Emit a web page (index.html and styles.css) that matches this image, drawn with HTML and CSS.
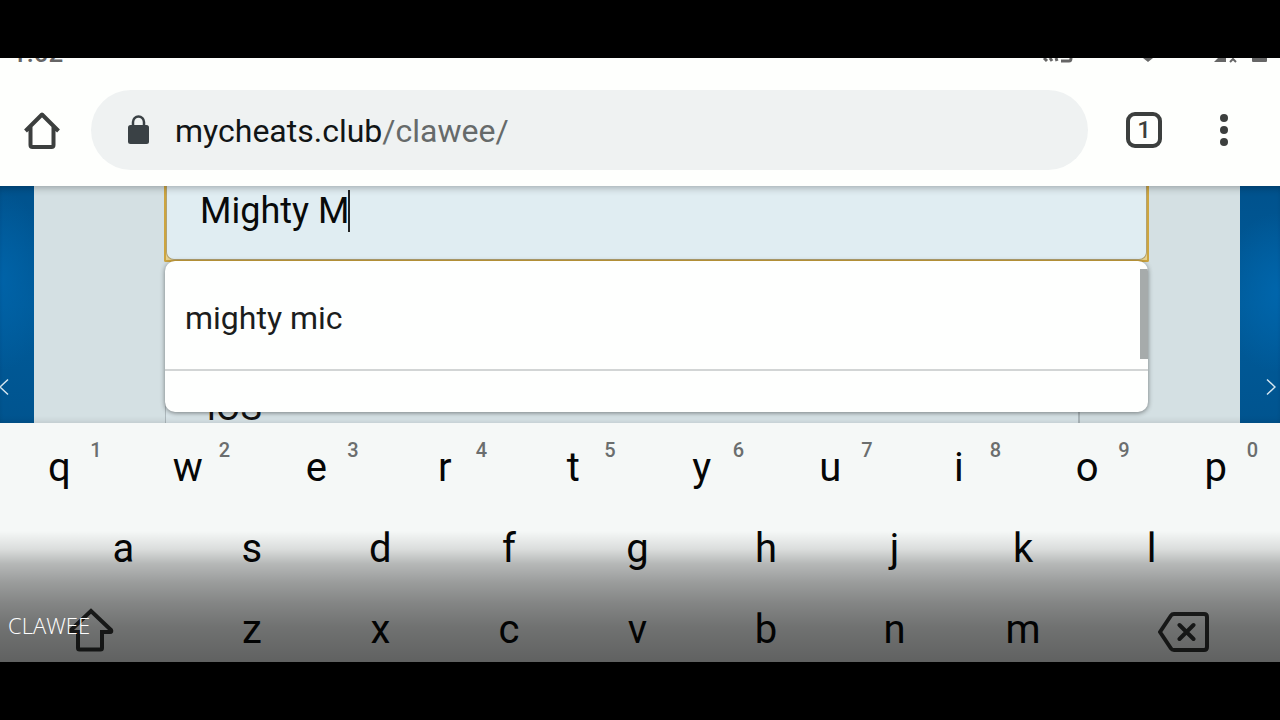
FILE: index.html
```html
<!DOCTYPE html>
<html lang="en">
<head>
<meta charset="utf-8">
<meta name="viewport" content="width=device-width, initial-scale=1">
<title>CLAWEE</title>
<link rel="stylesheet" href="styles.css">
</head>
<body>
<div class="screen">
  <header class="browser">
    <div class="status">
      <span class="clock">1:02</span>
      <svg class="status-icons" width="240" height="6" viewBox="0 0 240 6" aria-hidden="true">
        <g fill="none" stroke="#666" stroke-width="3">
          <path d="M14 0l3 3M20 0l2 3M26 0l1 3M31 3h8q2 0 2-3"/>
          <path d="M200 4l3-3 3 3" stroke-width="2"/>
        </g>
        <path d="M113 0h10l-5 4zM184 4l4-4h8v4zM222 0h15v3q0 1-1 1h-13q-1 0-1-1z" fill="#666"/>
      </svg>
    </div>
    <div class="toolbar">
      <button class="tool" aria-label="Home">
        <svg width="36" height="38" viewBox="0 0 36 38"><path d="M1.500 20L18 3.500 34.500 20M6.500 16v18q0 2 2 2h19q2 0 2-2V16" fill="none" stroke="#3c3f3e" stroke-width="4" stroke-linejoin="round"/></svg>
      </button>
      <div class="address">
        <svg width="22" height="30" viewBox="0 0 22 30" aria-hidden="true"><rect x="1" y="10" width="21" height="19" rx="2.500" fill="#3a4145"/><path d="M6 11V7a5.500 5.500 0 0 1 11 0v4" fill="none" stroke="#3a4145" stroke-width="2.500"/></svg>
        <a class="url" href="#">mycheats.club<span class="path">/clawee/</span></a>
      </div>
      <button class="tool tabs" aria-label="Open tabs">1</button>
      <button class="tool menu" aria-label="Menu">
        <svg width="8" height="34" viewBox="0 0 8 34" fill="#3c3f3e"><circle cx="4" cy="5" r="4"/><circle cx="4" cy="17" r="4"/><circle cx="4" cy="29" r="4"/></svg>
      </button>
    </div>
  </header>

  <main class="page">
    <form class="panel">
      <div class="field">
        <input class="name" type="text" value="Mighty M" aria-label="Username" autocomplete="off">
        <span class="caret"></span>
        <div class="suggestions">
          <button type="button" class="suggestion">mighty mic</button>
          <span class="thumb"></span>
        </div>
      </div>
      <select class="platform" aria-label="Platform"><option>iOS</option></select>
    </form>
    <button class="arrow prev" aria-label="Previous"><svg width="10" height="18" viewBox="0 0 10 18"><path d="M8 1.500L0 9l8 7.500" fill="none" stroke="#d5e6f0" stroke-width="1.500"/></svg></button>
    <button class="arrow next" aria-label="Next"><svg width="10" height="18" viewBox="0 0 10 18"><path d="M1 1.500L9 9l-8 7.500" fill="none" stroke="#d5e6f0" stroke-width="1.500"/></svg></button>
  </main>

  <section class="keyboard" aria-label="Keyboard">
    <div class="keys top">
      <button class="key">q<sup>1</sup></button><button class="key">w<sup>2</sup></button><button class="key">e<sup>3</sup></button><button class="key">r<sup>4</sup></button><button class="key">t<sup>5</sup></button><button class="key">y<sup>6</sup></button><button class="key">u<sup>7</sup></button><button class="key">i<sup>8</sup></button><button class="key">o<sup>9</sup></button><button class="key">p<sup>0</sup></button>
    </div>
    <div class="keys home">
      <button class="key">a</button><button class="key">s</button><button class="key">d</button><button class="key">f</button><button class="key">g</button><button class="key">h</button><button class="key">j</button><button class="key">k</button><button class="key">l</button>
    </div>
    <div class="keys bottom">
      <button class="key" aria-label="Shift"><svg width="48" height="48" viewBox="0 0 48 48"><path d="M24 5L4 24q-1 2 1 2h6v16q0 1.500 1.500 1.500h21q1.500 0 1.500-1.500V26h8q2 0 1-2z" fill="none" stroke="#303231" stroke-width="4"/></svg></button>
      <button class="key">z</button><button class="key">x</button><button class="key">c</button><button class="key">v</button><button class="key">b</button><button class="key">n</button><button class="key">m</button>
      <button class="key" aria-label="Backspace"><svg width="52" height="48" viewBox="0 0 52 48"><path d="M16 8h30q3 0 3 3v30q0 3-3 3H16q-2 0-3-1.500L2 26l11-16.500Q14 8 16 8zM21.500 19l14 14M35.500 19l-14 14" fill="none" stroke="#303231" stroke-width="4" stroke-linecap="round"/></svg></button>
    </div>
    <div class="caption">CLAWEE</div>
  </section>
</div>
</body>
</html>
```
FILE: styles.css
```css
* { box-sizing: border-box; }

body {
  margin: 0;
  background: #000;
  font-family: Roboto, "Liberation Sans", sans-serif;
  color: #111;
}

button {
  border: 0;
  padding: 0;
  background: none;
  font: inherit;
  color: inherit;
}

svg { display: block; }

.screen {
  display: flex;
  flex-direction: column;
  min-height: 100vh;
  padding: 58px 0;
}

.browser {
  background: #fefffd;
}

.status {
  display: flex;
  justify-content: space-between;
  align-items: flex-end;
  height: 6px;
  padding: 0 10px 0 12px;
  overflow: hidden;
}

.clock {
  font-size: 26px;
  font-weight: 500;
  line-height: 22px;
  color: #666;
}

.toolbar {
  display: flex;
  align-items: center;
  padding: 26px 38px 16px 24px;
}

.tool {
  display: flex;
  justify-content: center;
  align-items: center;
  flex: none;
  width: 36px;
  height: 36px;
}

.address {
  display: flex;
  align-items: center;
  flex: 1;
  height: 80px;
  margin: 0 38px 0 31px;
  padding: 0 36px;
  border-radius: 40px;
  background: #eff2f2;
}

.url {
  margin-left: 26px;
  padding-top: 2px;
  font-size: 32px;
  color: #111516;
  text-decoration: none;
}

.path { color: #666a6a; }

.tabs {
  border: 4px solid #3c3f3e;
  border-radius: 9px;
  font-size: 24px;
  font-weight: 500;
  color: #3c3f3e;
}

.menu {
  margin: 0 0 0 44px;
}

.page {
  position: relative;
  flex: 1 0 237px;
  height: 237px;
  padding: 0 40px 0 34px;
  overflow: hidden;
  background:
    radial-gradient(ellipse 60px 80px at 100% 45%, #0066ac, transparent),
    radial-gradient(ellipse 50px 90px at 0 40%, #0063a8, transparent),
    linear-gradient(#00528d, #005b9a 50%, #00548f);
}

.page::after {
  content: "";
  position: absolute;
  inset: 0;
  box-shadow: inset 0 7px 8px -6px #0005, inset 0 -5px 8px -6px #0003;
  pointer-events: none;
}

.panel {
  height: 100%;
  padding: 0 91px 0 130px;
  background: #d4e0e3;
}

.field {
  position: relative;
  border: 2px solid #cda53f;
  border-top: 0;
  border-radius: 0 0 2px 2px;
  background: #e6d18e;
}

.name {
  display: block;
  width: 100%;
  height: 74px;
  padding: 2px 33px 25px;
  border: 1px solid #b3a270;
  border-top: 0;
  border-radius: 0 0 8px 8px;
  outline: 0;
  background: #e0edf2;
  font: 36px Roboto, "Liberation Sans", sans-serif;
  color: #080a0a;
}

.caret {
  position: absolute;
  left: 182px;
  top: 4px;
  width: 2px;
  height: 42px;
  background: #222;
}

.suggestions {
  position: absolute;
  z-index: 1;
  top: 75px;
  left: -1px;
  right: -1px;
  height: 151px;
  border-radius: 10px;
  overflow: hidden;
  background: #fefffe;
  box-shadow: 0 1px 5px #0007;
}

.suggestion {
  width: 100%;
  height: 110px;
  padding: 6px 20px 0;
  border-bottom: 2px solid #d2d5d5;
  text-align: left;
  font-size: 32px;
  color: #1b1d1d;
}

.thumb {
  position: absolute;
  top: 8px;
  right: 0;
  width: 8px;
  height: 90px;
  background: #a6abab;
}

.platform {
  display: block;
  width: calc(100% - 70px);
  height: 76px;
  margin: 108px 0 0 1px;
  padding: 0 41px;
  appearance: none;
  border: 1px solid #adb8bc;
  border-width: 1px 2px 1px 1px;
  background: #d8e4e8;
  font: 36px Roboto, "Liberation Sans", sans-serif;
  color: #111;
}

.arrow {
  position: absolute;
  top: 192px;
}

.prev { left: 0; }
.next { right: 4px; }

.keyboard {
  position: relative;
  overflow: hidden;
  padding-top: 3px;
  background: #f5f8f7;
  color: #050606;
}

.keyboard::after {
  content: "";
  position: absolute;
  inset: 108px 0 0;
  background: linear-gradient(#0000, #0000001c 14%, #00000042 25%, #0000005e 39%, #00000076 55%, #0000008a 73%, #0000009b);
  pointer-events: none;
}

.keys {
  display: grid;
  height: 81px;
  margin-left: -5px;
}

.top { grid-template-columns: repeat(10, 1fr); }

.home {
  grid-template-columns: repeat(9, 1fr);
  padding: 0 64px;
}

.bottom {
  grid-template-columns: 3fr repeat(7, 2fr) 3fr;
  height: 74px;
}

.key {
  position: relative;
  display: flex;
  justify-content: center;
  align-items: flex-start;
  padding-top: 18px;
  font-size: 40px;
  line-height: 48px;
}

.key sup {
  position: absolute;
  top: 12px;
  left: calc(50% + 31px);
  font-size: 20px;
  font-weight: 500;
  line-height: 24px;
  color: #6b6e6e;
}

.caption {
  position: absolute;
  z-index: 1;
  left: 8px;
  bottom: 21px;
  font: 300 22px/32px "Open Sans", "Noto Sans", sans-serif;
  color: #fff;
}
```
